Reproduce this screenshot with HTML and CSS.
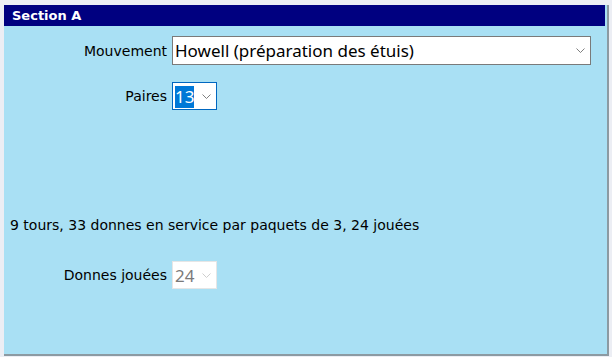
FILE: index.html
```html
<!DOCTYPE html>
<html>
  <head>
    <meta charset="UTF-8" />
    <meta name="viewport" content="width=device-width, initial-scale=1.0" />
    <title>Section A</title>
    <link rel="stylesheet" href="styles.css">
  </head>

  <body>
    <div class="panel">
      <div class="title">Section A</div>
      <div class="content">
        <div class="row first">
          <span class="label">Mouvement</span>
          <div class="select wide">
            <span class="value">Howell (préparation des étuis)</span>
            <svg class="chev" width="9" height="5" viewBox="0 0 9 5"><path d="M0.5 0.5 L4.5 4.5 L8.5 0.5" fill="none" stroke="#707070" stroke-width="0.9"/></svg>
          </div>
        </div>
        <div class="row second">
          <span class="label">Paires</span>
          <div class="select small focus">
            <span class="value"><span class="hl">13</span></span>
            <svg class="chev" width="9" height="5" viewBox="0 0 9 5"><path d="M0.5 0.5 L4.5 4.5 L8.5 0.5" fill="none" stroke="#707070" stroke-width="0.9"/></svg>
          </div>
        </div>
        <p class="info">9 tours, 33 donnes en service par paquets de 3, 24 jouées</p>
        <div class="row third">
          <span class="label">Donnes jouées</span>
          <div class="select small disabled">
            <span class="value">24</span>
            <svg class="chev" width="9" height="5" viewBox="0 0 9 5"><path d="M0.5 0.5 L4.5 4.5 L8.5 0.5" fill="none" stroke="#c8c8c8" stroke-width="0.9"/></svg>
          </div>
        </div>
      </div>
    </div>
  </body>
</html>
```

FILE: styles.css
```css
* {
  padding: 0px;
  margin: 0px;
  box-sizing: border-box;
}

body {
  width: 612px;
  height: 357px;
  overflow: hidden;
  background: #eceef4;
  font-family: "DejaVu Sans", Verdana, sans-serif;
  font-size: 14px;
  color: #000000;
}

.panel {
  margin: 5px 0 0 4px;
  width: 605px;
  height: 351px;
  background: #a9e0f4;
  border-right: 2px solid #8c9aa2;
  border-bottom: 2px solid #8c9aa2;
  display: flex;
  flex-direction: column;
}

.title {
  height: 21px;
  margin-right: 2px;
  background: #000080;
  color: #ffffff;
  font-weight: bold;
  font-size: 13px;
  line-height: 21px;
  padding-left: 8px;
}

.content {
  display: flex;
  flex-direction: column;
}

.row {
  display: flex;
  align-items: center;
}

.row.first {
  margin-top: 10px;
}

.row.second {
  margin-top: 17px;
}

.row.third {
  margin-top: 20px;
}

.label {
  width: 164px;
  text-align: right;
  padding-right: 1px;
}

.select {
  margin-left: 4px;
  height: 29px;
  background: #ffffff;
  border: 1px solid #7a7a7a;
  display: flex;
  align-items: center;
  justify-content: space-between;
  font-family: "Noto Sans", "Open Sans", sans-serif;
  font-size: 17px;
  padding: 0 5px 0 2px;
}

.select.wide {
  width: 419px;
}

.select.small {
  width: 45px;
  height: 28px;
  padding-right: 5px;
}

.select.focus {
  border-color: #0067c0;
}

.select.disabled {
  border-color: #e6e6e6;
  color: #7a7a7a;
}

.hl {
  display: inline-block;
  height: 22px;
  line-height: 22px;
  background: #0078d7;
  color: #ffffff;
}

.info {
  margin: 99px 0 0 6px;
  height: 32px;
  line-height: 32px;
  padding-bottom: 6px;
}
```
